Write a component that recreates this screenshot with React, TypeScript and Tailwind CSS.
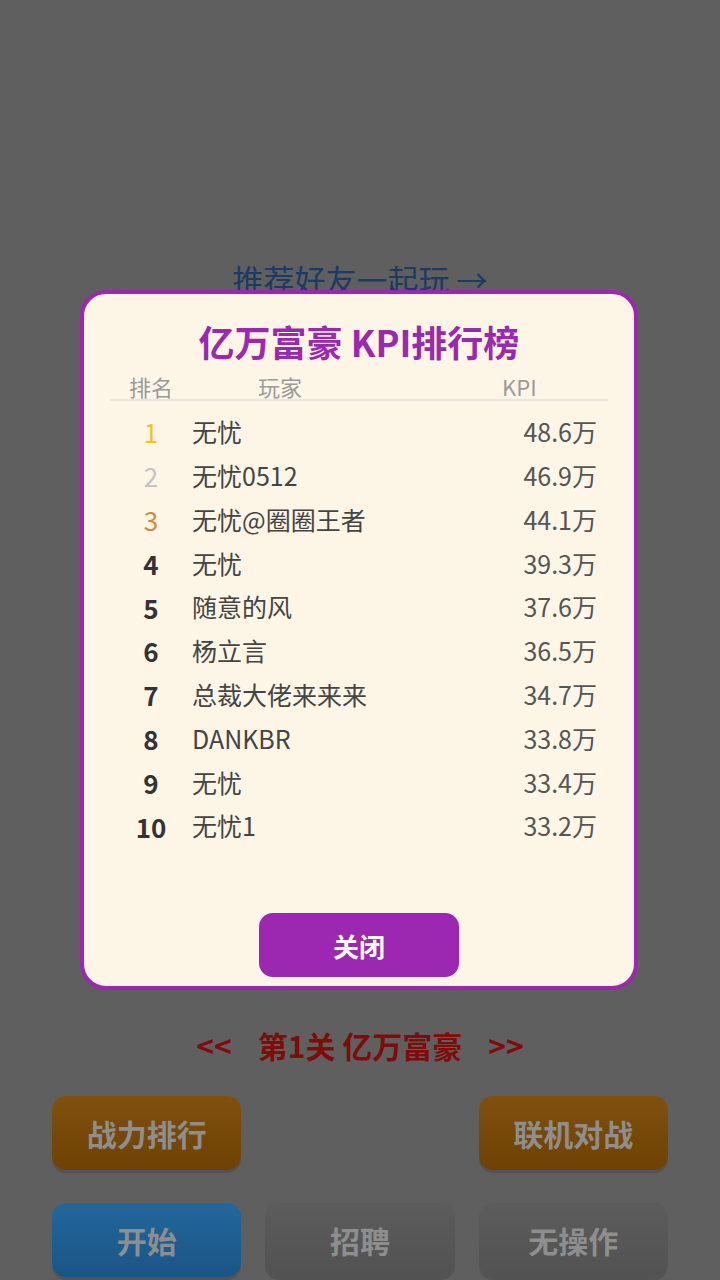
const FONT = "font-['Noto_Sans_CJK_SC','Noto_Sans',sans-serif]";

type Row = { rank: number; name: string; kpi: string };

const ROWS: Row[] = [
  { rank: 1, name: '无忧', kpi: '48.6万' },
  { rank: 2, name: '无忧0512', kpi: '46.9万' },
  { rank: 3, name: '无忧@圈圈王者', kpi: '44.1万' },
  { rank: 4, name: '无忧', kpi: '39.3万' },
  { rank: 5, name: '随意的风', kpi: '37.6万' },
  { rank: 6, name: '杨立言', kpi: '36.5万' },
  { rank: 7, name: '总裁大佬来来来', kpi: '34.7万' },
  { rank: 8, name: 'DANKBR', kpi: '33.8万' },
  { rank: 9, name: '无忧', kpi: '33.4万' },
  { rank: 10, name: '无忧1', kpi: '33.2万' },
];

const rankColor = (r: number) =>
  r === 1 ? 'text-[#f4c41a] font-normal' :
  r === 2 ? 'text-[#c4c4c4] font-normal' :
  r === 3 ? 'text-[#d08a3c] font-normal' : 'text-[#333333] font-bold';

function GameButton({ label, tone }: { label: string; tone: 'orange' | 'blue' | 'gray' | 'none' }) {
  if (tone === 'none') return <div />;
  const bg =
    tone === 'orange' ? 'bg-gradient-to-b from-[#80500e] to-[#6e4204]' :
    tone === 'blue' ? 'bg-gradient-to-b from-[#23679c] to-[#1b5585]' :
    'bg-gradient-to-b from-[#5c5c5c] to-[#525252]';
  return (
    <div className={`h-[74px] rounded-[14px] ${bg} shadow-[0_3px_0_rgba(0,0,0,0.12)] flex items-center justify-center`}>
      <span className="text-[30px] font-bold text-[#8e8e8e]">{label}</span>
    </div>
  );
}

export default function App() {
  return (
    <div className={`relative w-[720px] h-[1280px] overflow-hidden bg-[#5f5f5f] ${FONT}`}>
      {/* dimmed page behind the dialog */}
      <div className="flex flex-col items-center">
        <div className="mt-[260px] h-[38px] text-[31px] leading-[38px] text-[#1c3a62]">推荐好友一起玩 →</div>
        <div className="mt-[729px] h-[36px] flex items-center gap-[26px] text-[30px] leading-[36px] font-bold text-[#7f0b0b]">
          <span>&lt;&lt;</span>
          <span>第1关 亿万富豪</span>
          <span>&gt;&gt;</span>
        </div>
        <div className="mt-[33px] w-[616px] grid grid-cols-3 gap-x-[24px] gap-y-[33px]">
          <GameButton label="战力排行" tone="orange" />
          <GameButton label="" tone="none" />
          <GameButton label="联机对战" tone="orange" />
          <GameButton label="开始" tone="blue" />
          <GameButton label="招聘" tone="gray" />
          <GameButton label="无操作" tone="gray" />
        </div>
      </div>

      {/* leaderboard dialog */}
      <div className="absolute left-[80px] top-[290px] w-[558px] h-[700px] rounded-[26px] border-4 border-[#9c27b0] bg-[#fdf6e7] flex flex-col">
        <div className="pt-[25px] h-[69px] text-center text-[36px] leading-[44px] font-bold text-[#9a28b0]">亿万富豪 KPI排行榜</div>

        <div className="mx-[26px] mt-[10px]">
          <div className="flex h-[26px] items-center text-[22px] text-[#9a9a9a]">
            <div className="w-[82px] text-center">排名</div>
            <div className="w-[244px] pl-[66px]">玩家</div>
            <div className="ml-[66px]">KPI</div>
          </div>
          <div className="h-[2px] bg-[#e9e6de]" />

          <div className="mt-[9px]">
            {ROWS.map((r) => (
              <div key={r.rank} className="flex h-[43.8px] items-center">
                <div className={`w-[82px] text-center text-[26px] ${rankColor(r.rank)}`}>{r.rank}</div>
                <div className="flex-1 text-[25px] text-[#444444]">{r.name}</div>
                <div className="pr-[11px] text-[25px] text-[#555555]">{r.kpi}</div>
              </div>
            ))}
          </div>
        </div>

        <div className="mt-auto pb-[9px] flex justify-center">
          <button className="w-[200px] h-[64px] rounded-[14px] bg-[#9c27b0] text-white text-[26px] font-bold">关闭</button>
        </div>
      </div>
    </div>
  );
}
